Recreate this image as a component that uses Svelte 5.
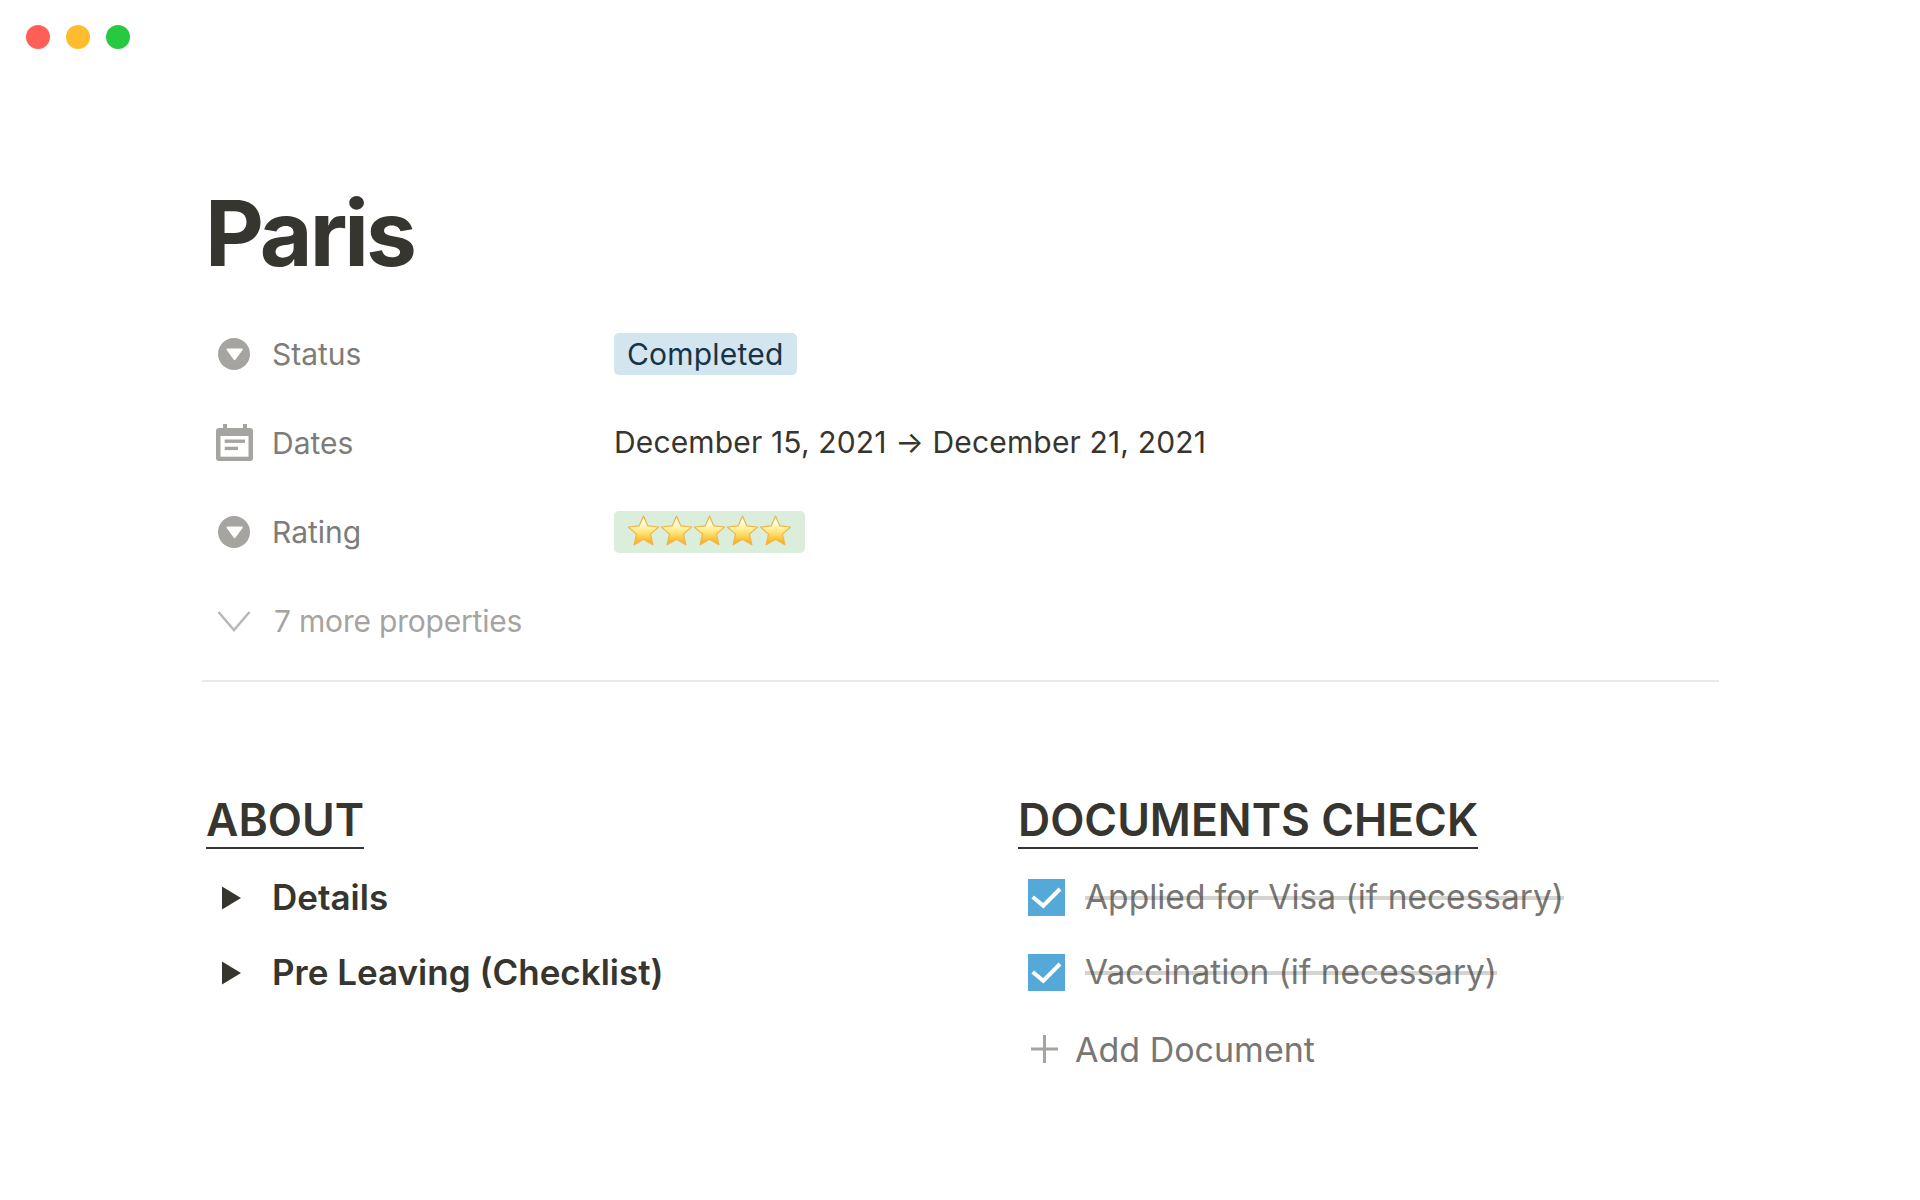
<!-- Notion style trip page: Paris -->
<script lang="ts">
  const docs = ["Applied for Visa (if necessary)", "Vaccination (if necessary)"];
  const toggles = ["Details", "Pre Leaving (Checklist)"];
</script>

{#snippet selectIcon()}
  <svg class="prop-icon" viewBox="0 0 32 32">
    <circle cx="16" cy="16" r="16" fill="#a5a4a0" />
    <path d="M9.500 11.500h14.200L16.600 21.200z" fill="#fff" stroke="#fff" stroke-width="2" stroke-linejoin="round" />
  </svg>
{/snippet}

{#snippet star(id)}
  <svg class="star" viewBox="0 0 32 32">
    <defs>
      <linearGradient id={id} x1="0" y1="0" x2="0" y2="1">
        <stop offset="0.25" stop-color="#fffde0" />
        <stop offset="0.55" stop-color="#ffe77a" />
        <stop offset="1" stop-color="#f7a80d" />
      </linearGradient>
    </defs>
    <path
      d="M16 2l4.200 9.600 10.400 1-7.900 6.900 2.400 10.300L16 24.400 6.900 29.800l2.400-10.300L1.400 12.600l10.400-1z"
      fill="url(#{id})"
      stroke="#f0b64a"
      stroke-width="1.2"
      stroke-linejoin="round"
    />
  </svg>
{/snippet}

<div class="window">
  <div class="traffic">
    <span class="dot red"></span>
    <span class="dot yellow"></span>
    <span class="dot green"></span>
  </div>

  <main class="page">
    <h1 class="title">Paris</h1>

    <div class="props">
      <div class="prop">
        <div class="prop-name">
          <span class="icon-slot">{@render selectIcon()}</span>
          <span>Status</span>
        </div>
        <span class="pill blue">Completed</span>
      </div>

      <div class="prop">
        <div class="prop-name">
          <span class="icon-slot">
            <svg class="cal-icon" viewBox="0 0 37 37">
              <path
                d="M7 0h4v4h16V0h4v4h3a3 3 0 0 1 3 3v27a3 3 0 0 1-3 3H3a3 3 0 0 1-3-3V7a3 3 0 0 1 3-3h4z"
                fill="#a5a4a0"
              />
              <rect x="4.500" y="12" width="28" height="20.700" fill="#fff" />
              <rect x="8.700" y="15.500" width="20.300" height="3.400" fill="#a5a4a0" />
              <rect x="8.700" y="22.700" width="13.300" height="3.400" fill="#a5a4a0" />
            </svg>
          </span>
          <span>Dates</span>
        </div>
        <span class="date">December 15, 2021 → December 21, 2021</span>
      </div>

      <div class="prop">
        <div class="prop-name">
          <span class="icon-slot">{@render selectIcon()}</span>
          <span>Rating</span>
        </div>
        <span class="pill green-pill">
          {#each [1, 2, 3, 4, 5] as n}
            {@render star("star" + n)}
          {/each}
        </span>
      </div>

      <div class="prop more">
        <div class="prop-name">
          <span class="icon-slot">
            <svg class="chevron" viewBox="0 0 34 22">
              <path d="M1.500 2L17 20 32.500 2" fill="none" stroke="#b9b8b5" stroke-width="2.500" />
            </svg>
          </span>
          <span class="more-label">7 more properties</span>
        </div>
      </div>
    </div>

    <div class="divider"></div>

    <div class="columns">
      <section>
        <h2 class="heading">ABOUT</h2>
        {#each toggles as t}
          <div class="toggle">
            <svg class="caret" viewBox="0 0 20 24"><path d="M0 0l20 12L0 24z" fill="#37352f" /></svg>
            <span>{t}</span>
          </div>
        {/each}
      </section>

      <section>
        <h2 class="heading">DOCUMENTS CHECK</h2>
        {#each docs as d}
          <div class="todo">
            <span class="check">
              <svg viewBox="0 0 37 37">
                <path d="M4.700 18l10.600 8.700L32 10" fill="none" stroke="#fff" stroke-width="4" />
              </svg>
            </span>
            <span class="done">{d}</span>
          </div>
        {/each}
        <div class="add">
          <svg class="plus" viewBox="0 0 27 28">
            <path d="M13.500 0v28M0 14h27" stroke="#a5a4a0" stroke-width="3" fill="none" />
          </svg>
          <span>Add Document</span>
        </div>
      </section>
    </div>
  </main>
</div>

<style>
  :global(body) {
    background: #fff;
    font-family: Inter, "Liberation Sans", sans-serif;
    color: #37352f;
  }

  .window {
    height: 1200px;
    overflow: hidden;
  }

  .traffic {
    display: flex;
    gap: 16px;
    padding: 25px 0 0 26px;
  }

  .dot {
    width: 24px;
    height: 24px;
    border-radius: 50%;
  }
  .red { background: #ff5f57; }
  .yellow { background: #febc2e; }
  .green { background: #28c840; }

  .page {
    padding: 0 201px 0 202px;
  }

  .title {
    margin: 131px 0 0 3px;
    font-size: 91px;
    line-height: 106px;
    font-weight: 700;
    letter-spacing: -3px;
  }

  .props {
    margin-top: 23px;
  }

  .prop {
    display: flex;
    align-items: center;
    height: 89px;
    font-size: 30px;
  }

  .prop-name {
    display: flex;
    align-items: center;
    width: 412px;
    color: #7d7c78;
  }

  .more .prop-name {
    color: #a5a4a0;
  }

  .more-label {
    margin-left: 2px;
    letter-spacing: -0.2px;
  }

  .icon-slot {
    display: flex;
    justify-content: center;
    width: 70px;
    flex: none;
  }

  .prop-icon {
    width: 32px;
    height: 32px;
    margin-right: 6px;
  }

  .cal-icon {
    width: 37px;
    height: 37px;
    margin-right: 6px;
  }

  .chevron {
    width: 34px;
    height: 22px;
    margin-right: 6px;
  }

  .pill {
    display: inline-flex;
    align-items: center;
    height: 42px;
    padding: 0 13px;
    border-radius: 5px;
    color: #183347;
    letter-spacing: 0.2px;
  }

  .blue { background: #d3e5ef; }
  .green-pill { background: #dbeddb; }

  .star {
    width: 33px;
    height: 33px;
    flex: none;
    margin-bottom: 2px;
  }

  .date {
    color: #37352f;
    letter-spacing: 0.15px;
    padding-bottom: 2px;
  }

  .divider {
    height: 2px;
    background: #e9e9e7;
    margin-top: 15px;
  }

  .columns {
    display: grid;
    grid-template-columns: 812px 1fr;
    margin-top: 112px;
    padding-left: 4px;
  }

  .heading {
    display: inline-block;
    margin: 0;
    font-size: 44.500px;
    line-height: 53px;
    font-weight: 600;
    border-bottom: 2px solid #37352f;
  }

  .toggle, .todo {
    display: flex;
    align-items: center;
    height: 75px;
  }

  .toggle {
    font-size: 35px;
    font-weight: 600;
  }
  .toggle:first-of-type, .todo:first-of-type {
    margin-top: 10px;
  }

  .caret {
    width: 19px;
    height: 24px;
    margin: 2px 31px 0 16px;
  }

  .todo {
    font-size: 33.500px;
    color: #787774;
  }

  .check {
    display: flex;
    width: 37px;
    height: 37px;
    margin: 2px 20px 0 10px;
    background: #54a9d9;
  }

  .done {
    text-decoration: line-through;
    text-decoration-color: rgba(55, 53, 47, 0.22);
    text-decoration-thickness: 4px;
  }

  .add {
    display: flex;
    align-items: center;
    height: 80px;
    font-size: 34px;
    color: #787774;
  }

  .plus {
    width: 27px;
    height: 28px;
    margin: 0 17px 0 13px;
  }
</style>
